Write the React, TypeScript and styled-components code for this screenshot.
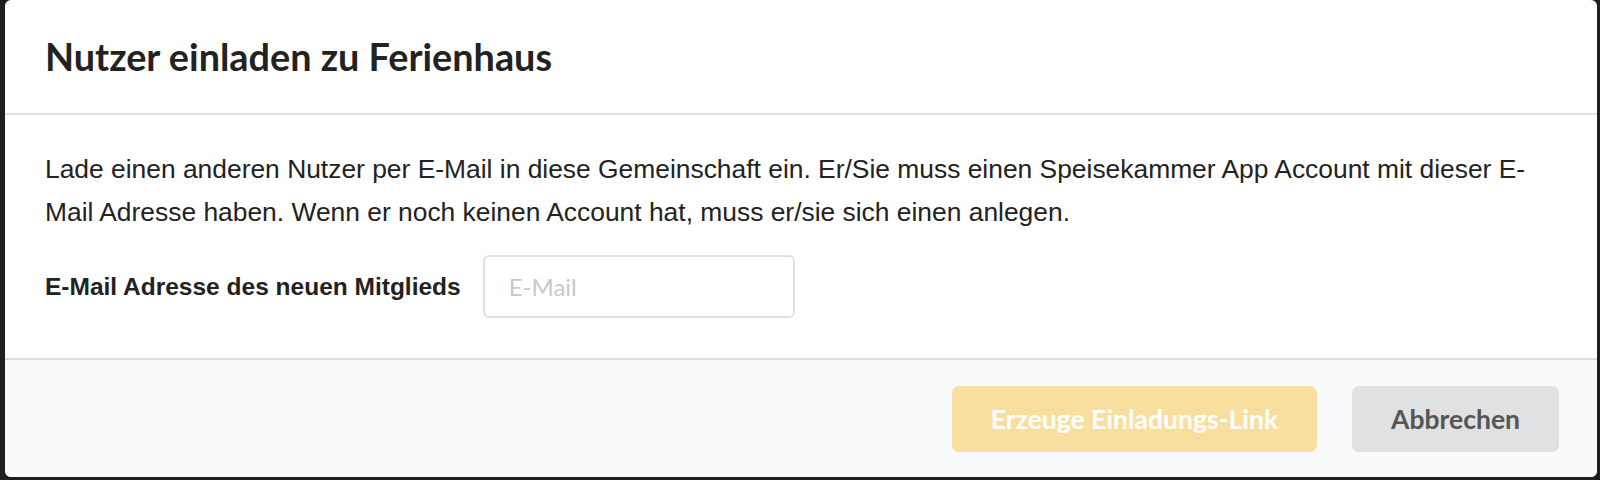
import styled, { createGlobalStyle } from "styled-components";

const GlobalStyle = createGlobalStyle`
  html, body {
    margin: 0;
    padding: 0;
    background: #1e1e1e;
  }
  body {
    font-family: "Liberation Sans", Arial, sans-serif;
  }
`;

const Backdrop = styled.div`
  width: 1600px;
  height: 480px;
  padding: 0 3px 3px 5px;
  box-sizing: border-box;
  background: #1e1e1e;
`;

const Modal = styled.div`
  height: 100%;
  display: flex;
  flex-direction: column;
  background: #ffffff;
  border-radius: 6px;
  overflow: hidden;
`;

const Header = styled.div`
  height: 115px;
  flex: none;
  display: flex;
  align-items: center;
  padding: 0 40px;
  border-bottom: 2px solid #e2e2e2;
  box-sizing: border-box;
`;

const Title = styled.h1`
  margin: 0;
  font-family: Lato, "Open Sans", sans-serif;
  font-weight: 700;
  font-size: 37.8px;
  color: #222222;
  line-height: 1;
`;

const Content = styled.div`
  flex: 1;
  padding: 33px 40px 0 40px;
  color: #222222;
`;

const Text = styled.p`
  margin: 0;
  font-size: 26.4px;
  line-height: 43px;
`;

const Field = styled.div`
  margin-top: 21px;
  display: flex;
  align-items: center;
  gap: 22px;
`;

const Label = styled.label`
  font-size: 24.5px;
  font-weight: 700;
  color: #222222;
`;

const Input = styled.input`
  width: 312px;
  height: 63px;
  box-sizing: border-box;
  padding: 0 24px;
  border: 2px solid #e0e0e0;
  border-radius: 6px;
  font-family: Lato, "Open Sans", sans-serif;
  font-size: 24px;
  color: #222222;
  outline: none;

  &::placeholder {
    color: #c8c8c8;
  }
`;

const Footer = styled.div`
  height: 119px;
  flex: none;
  box-sizing: border-box;
  border-top: 2px solid #dcdddf;
  background: #f9fafb;
  display: flex;
  justify-content: flex-end;
  align-items: flex-start;
  gap: 35px;
  padding: 26px 38px 0 0;
`;

const Button = styled.button<{ $variant: "primary" | "secondary" }>`
  height: 66px;
  padding: 0 39px;
  border: none;
  border-radius: 7px;
  font-family: Lato, "Open Sans", sans-serif;
  font-weight: 700;
  font-size: 26.5px;
  background: ${(p) => (p.$variant === "primary" ? "#f9df9f" : "#e0e1e2")};
  color: ${(p) => (p.$variant === "primary" ? "#ffffff" : "#555555")};
  cursor: pointer;
`;

const App = () => {
  return (
    <>
      <GlobalStyle />
      <Backdrop>
        <Modal>
          <Header>
            <Title>Nutzer einladen zu Ferienhaus</Title>
          </Header>
          <Content>
            <Text>
              Lade einen anderen Nutzer per E-Mail in diese Gemeinschaft ein.
              Er/Sie muss einen Speisekammer App Account mit dieser E-Mail
              Adresse haben. Wenn er noch keinen Account hat, muss er/sie sich
              einen anlegen.
            </Text>
            <Field>
              <Label htmlFor="email">E-Mail Adresse des neuen Mitglieds</Label>
              <Input id="email" type="email" placeholder="E-Mail" />
            </Field>
          </Content>
          <Footer>
            <Button $variant="primary" disabled>
              Erzeuge Einladungs-Link
            </Button>
            <Button $variant="secondary">Abbrechen</Button>
          </Footer>
        </Modal>
      </Backdrop>
    </>
  );
};

export default App;
